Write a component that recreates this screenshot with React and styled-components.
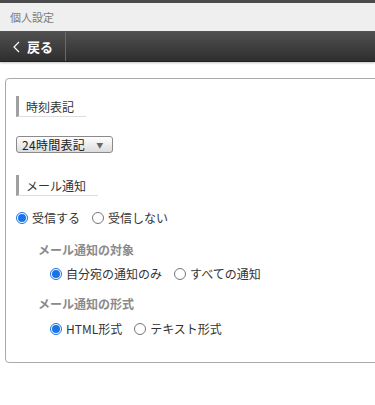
import React from "react";
import styled, { createGlobalStyle } from "styled-components";

const GlobalStyle = createGlobalStyle`
  body {
    margin: 0;
    background: #ffffff;
    font-family: "Noto Sans CJK JP", "Noto Sans", sans-serif;
    color: #333333;
  }
`;

const Page = styled.div`
  width: 375px;
  height: 405px;
  overflow: hidden;
  border-top: 3px solid #4a4a4a;
  box-sizing: border-box;
`;

const TitleBar = styled.div`
  height: 28px;
  background: #efefef;
  display: flex;
  align-items: center;
  padding-left: 10px;
  font-size: 11px;
  color: #7a7a7a;
  border-bottom: 1px solid #555555;
`;

const NavBar = styled.div`
  height: 29px;
  display: flex;
  background: linear-gradient(#505050, #2e2e2e);
  border-bottom: 1px solid #222222;
  box-shadow: 0 1px 2px rgba(0, 0, 0, 0.25);
`;

const BackButton = styled.div`
  width: 66px;
  display: flex;
  align-items: center;
  gap: 7px;
  padding-left: 13px;
  box-sizing: border-box;
  color: #ffffff;
  font-size: 13px;
  font-weight: bold;
  border-right: 1px solid #6a6a6a;
`;

const Panel = styled.div`
  margin: 16px -6px 0 5px;
  border: 1px solid #aaaaaa;
  border-radius: 4px;
  padding: 14px 0 25px 10px;
  box-sizing: border-box;
`;

const Heading = styled.div`
  display: inline-block;
  border-left: 3px solid #a0a0a0;
  border-bottom: 1px solid #dddddd;
  padding: 3px 12px 2px 7px;
  line-height: 15px;
  font-size: 12px;
  color: #333333;
  margin-top: ${(p) => p.$top || 0}px;
`;

const Select = styled.div`
  display: flex;
  align-items: center;
  width: 97px;
  height: 17px;
  box-sizing: border-box;
  margin-top: 19px;
  padding-left: 5px;
  border: 1px solid #8a8a8a;
  border-radius: 3px;
  background: linear-gradient(#ffffff, #dcdcdc);
  font-size: 12px;
  letter-spacing: 0.3px;
  color: #222222;
  gap: 11px;
`;

const Arrow = styled.span`
  font-size: 7px;
  color: #666666;
`;

const RadioRow = styled.div`
  display: flex;
  align-items: center;
  gap: 12px;
  line-height: 17px;
  margin-top: ${(p) => p.$top || 0}px;
  padding-left: ${(p) => p.$indent || 0}px;
  font-size: 12px;
  color: #333333;
`;

const Option = styled.label`
  display: flex;
  align-items: center;
  gap: 4px;
`;

const Dot = styled.span`
  width: 12px;
  height: 12px;
  border-radius: 50%;
  box-sizing: border-box;
  border: 1px solid ${(p) => (p.$on ? "#1a73e8" : "#767676")};
  display: flex;
  align-items: center;
  justify-content: center;
  background: #ffffff;
  &::after {
    content: "";
    width: 8px;
    height: 8px;
    border-radius: 50%;
    background: ${(p) => (p.$on ? "#1a73e8" : "transparent")};
  }
`;

const SubHeading = styled.div`
  padding-left: 22px;
  line-height: 17px;
  margin-top: ${(p) => p.$top || 0}px;
  font-size: 12px;
  font-weight: bold;
  color: #8a8a8a;
`;

const Radio = ({ on, children }) => (
  <Option>
    <Dot $on={on} />
    {children}
  </Option>
);

export default function App() {
  return (
    <Page>
      <GlobalStyle />
      <TitleBar>個人設定</TitleBar>
      <NavBar>
        <BackButton>
          <svg width="7" height="12" viewBox="0 0 7 12">
            <path d="M6 1L1 6l5 5" fill="none" stroke="#ffffff" strokeWidth="1.2" />
          </svg>
          戻る
        </BackButton>
      </NavBar>
      <Panel>
        <Heading>時刻表記</Heading>
        <Select>
          24時間表記 <Arrow>▼</Arrow>
        </Select>
        <div>
          <Heading $top={22}>メール通知</Heading>
        </div>
        <RadioRow $top={13}>
          <Radio on>受信する</Radio>
          <Radio>受信しない</Radio>
        </RadioRow>
        <SubHeading $top={15}>メール通知の対象</SubHeading>
        <RadioRow $top={7} $indent={34}>
          <Radio on>自分宛の通知のみ</Radio>
          <Radio>すべての通知</Radio>
        </RadioRow>
        <SubHeading $top={13}>メール通知の形式</SubHeading>
        <RadioRow $top={8} $indent={34}>
          <Radio on>HTML形式</Radio>
          <Radio>テキスト形式</Radio>
        </RadioRow>
      </Panel>
    </Page>
  );
}
